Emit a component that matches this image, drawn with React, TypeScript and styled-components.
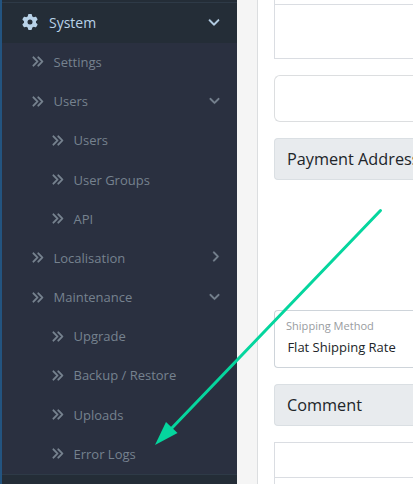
import React from "react";
import styled, { createGlobalStyle } from "styled-components";
import { FaGear, FaAnglesRight, FaAngleDown, FaAngleRight } from "react-icons/fa6";

const GlobalStyle = createGlobalStyle`
  * { box-sizing: border-box; }
  body {
    margin: 0;
    overflow: hidden;
    background: #ffffff;
    font-family: "Open Sans", sans-serif;
  }
`;

const Page = styled.div`
  position: relative;
  display: flex;
  width: 413px;
  height: 484px;
  overflow: hidden;
`;

const Sidebar = styled.nav`
  flex: 0 0 237px;
  border-left: 2px solid #235480;
  background: #242d37;
  padding-top: 2px;
`;

const TopItem = styled.div`
  display: flex;
  align-items: center;
  height: 41px;
  padding: 0 16.5px 2px 20px;
  border-top: 1px solid #2e3a47;
  color: #b8d2e8;
  font-size: 14px;

  span {
    flex: 1;
    margin-left: 11px;
  }
`;

const SubMenu = styled.div`
  background: #2a3040;
`;

const MenuRow = styled.div<{ $depth: number }>`
  display: flex;
  align-items: center;
  height: 39.2px;
  padding: 0 16.5px 1.32px ${(p) => 9 + p.$depth * 20}px;
  color: #76828f;
  font-size: 13px;

  span {
    flex: 1;
    margin-left: 9.5px;
  }
`;

const ItemIcon = styled(FaAnglesRight)`
  stroke: currentColor;
  stroke-width: 14px;
`;

const Caret = styled.i<{ $side?: boolean }>`
  display: flex;
  margin-bottom: ${(p) => (p.$side ? 2 : 1)}px;
  margin-right: ${(p) => (p.$side ? -1 : 0)}px;

  svg {
    stroke: currentColor;
    stroke-width: 12px;
  }
`;

const NextItem = styled.div`
  height: 12px;
  border-top: 1px solid #2e3a47;
`;

const Gutter = styled.div`
  flex: 0 0 20px;
  background: #f5f5f5;
`;

const Content = styled.main`
  flex: 1;
  min-width: 0;
  overflow: hidden;
  border-left: 1px solid #dcdee0;
  padding-left: 16px;
  background: #ffffff;
`;

const TableCell = styled.div<{ $height: number }>`
  height: ${(p) => p.$height}px;
  border-left: 1px solid #dadde2;
  border-bottom: 1px solid #dadde2;
`;

const Card = styled.div`
  height: 47px;
  margin-top: 16px;
  border: 1px solid #dcdee0;
  border-right: 0;
  border-radius: 6px 0 0 6px;
`;

const SectionTitle = styled.h2<{ $gap: number }>`
  display: flex;
  align-items: center;
  height: 42px;
  margin: ${(p) => p.$gap}px 0 0;
  padding-left: 12px;
  border: 1px solid #dadfe3;
  border-right: 0;
  border-radius: 4px 0 0 4px;
  background: #e8ebee;
  color: #212529;
  font-size: 16.25px;
  font-weight: 400;
  white-space: nowrap;
`;

const SelectField = styled.div`
  height: 58px;
  margin-top: 130px;
  padding: 7px 0 0 12px;
  border: 1px solid #ced4da;
  border-right: 0;
  border-radius: 4px 0 0 4px;
`;

const FieldLabel = styled.div`
  margin-left: -1px;
  color: #999c9f;
  font-size: 11.05px;
  line-height: 16px;
`;

const FieldValue = styled.div`
  color: #212529;
  font-size: 13px;
  line-height: 20px;
  margin: 3px 0 0 0.4px;
`;

const CommentTable = styled.div`
  margin-top: 16px;
  border-top: 1px solid #dadde2;
`;

const Arrow = styled.svg`
  position: absolute;
  inset: 0;
  pointer-events: none;
`;

type Entry = { label: string; depth: number; caret?: "down" | "right" };

const entries: Entry[] = [
  { label: "Settings", depth: 1 },
  { label: "Users", depth: 1, caret: "down" },
  { label: "Users", depth: 2 },
  { label: "User Groups", depth: 2 },
  { label: "API", depth: 2 },
  { label: "Localisation", depth: 1, caret: "right" },
  { label: "Maintenance", depth: 1, caret: "down" },
  { label: "Upgrade", depth: 2 },
  { label: "Backup / Restore", depth: 2 },
  { label: "Uploads", depth: 2 },
  { label: "Error Logs", depth: 2 },
];

export default function App() {
  return (
    <>
      <GlobalStyle />
      <Page>
        <Sidebar>
          <TopItem>
            <FaGear size={16} />
            <span>System</span>
            <Caret>
              <FaAngleDown size={14} />
            </Caret>
          </TopItem>
          <SubMenu>
            {entries.map((e, i) => (
              <MenuRow key={i} $depth={e.depth}>
                <ItemIcon size={13} />
                <span>{e.label}</span>
                {e.caret && (
                  <Caret $side={e.caret === "right"}>
                    {e.caret === "down" ? <FaAngleDown size={13} /> : <FaAngleRight size={13} />}
                  </Caret>
                )}
              </MenuRow>
            ))}
          </SubMenu>
          <NextItem />
        </Sidebar>
        <Gutter />
        <Content>
          <TableCell $height={5} />
          <TableCell $height={54} />
          <Card />
          <SectionTitle $gap={16}>Payment Address</SectionTitle>
          <SelectField>
            <FieldLabel>Shipping Method</FieldLabel>
            <FieldValue>Flat Shipping Rate</FieldValue>
          </SelectField>
          <SectionTitle $gap={16}>Comment</SectionTitle>
          <CommentTable>
            <TableCell $height={35} />
            <TableCell $height={30} />
          </CommentTable>
        </Content>
        <Arrow width="413" height="484" viewBox="0 0 413 484">
          <path d="M380.500 210.500L170 430" stroke="#05d69e" strokeWidth="3" strokeLinecap="round" fill="none" />
          <path d="M155 445L166 422L177.500 433Z" fill="#05d69e" />
        </Arrow>
      </Page>
    </>
  );
}
